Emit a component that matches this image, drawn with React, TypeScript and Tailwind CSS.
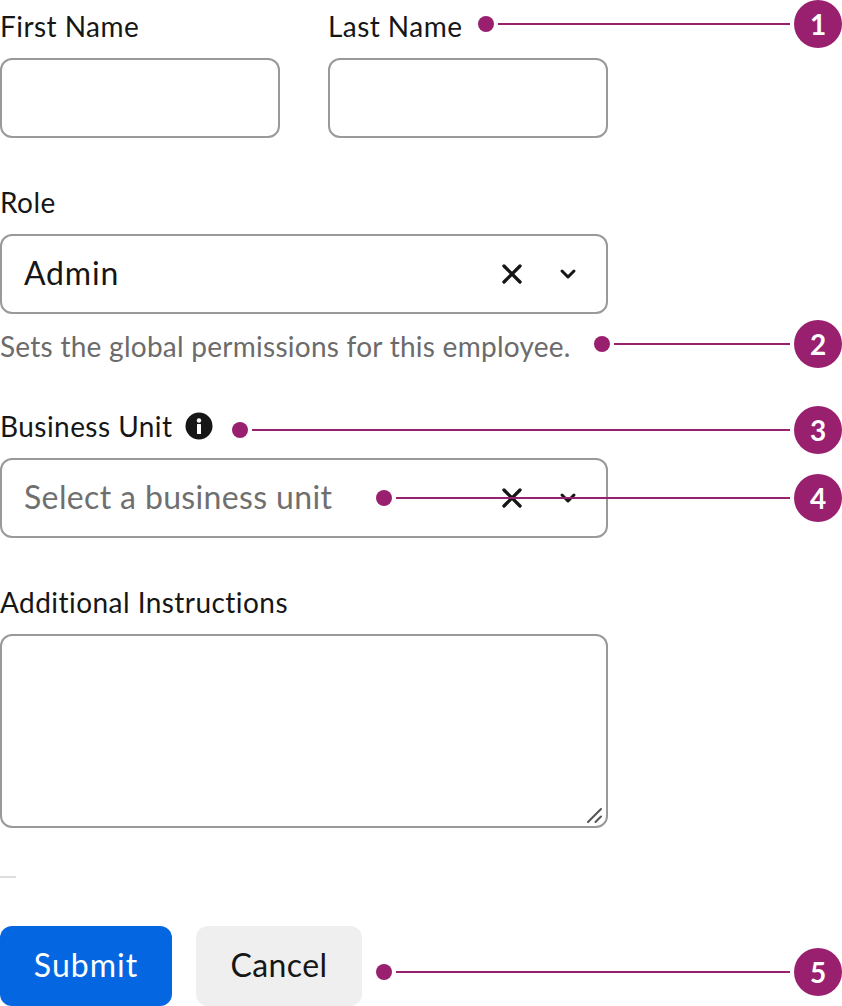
import { X, ChevronDown } from "lucide-react";

function Label({ children }: { children: React.ReactNode }) {
  return <div className="h-10 mb-[11px] pb-0.5 flex items-center gap-3 text-[28px] leading-10 tracking-[0.45px] text-[#161616]">{children}</div>;
}

function TextBox() {
  return <div className="h-20 w-[280px] rounded-xl border-2 border-[#999999] bg-white" />;
}

function SelectBox({ value, placeholder }: { value: string; placeholder?: boolean }) {
  return (
    <div className="h-20 w-[608px] rounded-xl border-2 border-[#999999] bg-white flex items-center pl-[22px] pr-[26px]">
      <span className={placeholder ? "flex-1 pb-0.5 text-[32px] tracking-[0.36px] text-[#6f6f6f]" : "flex-1 pb-0.5 text-[32px] tracking-[0.8px] text-[#161616]"}>{value}</span>
      <X size={32} strokeWidth={2.5} className="text-[#161616]" />
      <ChevronDown size={24} strokeWidth={3} className="ml-[28px] text-[#161616]" />
    </div>
  );
}

function Callout({ n, className }: { n: number; className: string }) {
  return (
    <div className={"absolute right-0 h-12 flex items-center " + className}>
      <div className="size-4 rounded-full bg-[#99206f]" />
      <div className="flex-1 h-0.5 mx-1 bg-[#99206f]" />
      <div className="size-12 rounded-full bg-[#99206f] flex items-center justify-center text-white text-[28px] font-bold">{n}</div>
    </div>
  );
}

export default function App() {
  return (
    <div className="relative h-[1006px] w-[842px] overflow-hidden bg-white font-['Lato',sans-serif]">
      <div className="w-[608px] pt-[7px]">
        <div className="flex gap-12">
          <div>
            <Label>First Name</Label>
            <TextBox />
          </div>
          <div>
            <Label>Last Name</Label>
            <TextBox />
          </div>
        </div>

        <div className="mt-[45px]">
          <Label>Role</Label>
          <SelectBox value="Admin" />
          <div className="mt-3 h-10 text-[28px] leading-10 tracking-[0.26px] text-[#6b6b6b]">Sets the global permissions for this employee.</div>
        </div>

        <div className="mt-[41px]">
          <Label>
            Business Unit
            <svg width="28" height="28" viewBox="0 0 28 28">
              <circle cx="14" cy="14" r="13.5" fill="#161616" />
              <circle cx="14" cy="8.5" r="2.2" fill="#fff" />
              <rect x="12" y="12" width="4" height="10" rx="0.5" fill="#fff" />
            </svg>
          </Label>
          <SelectBox value="Select a business unit" placeholder />
        </div>

        <div className="mt-[45px]">
          <Label>Additional Instructions</Label>
          <div className="relative h-[194px] rounded-xl border-2 border-[#999999] bg-white">
            <svg className="absolute right-[3px] bottom-[3px]" width="16" height="16" viewBox="0 0 16 16">
              <path d="M1 15 L14 2 M8.5 15 L14 9.5" stroke="#555555" strokeWidth="2" strokeLinecap="round" fill="none" />
            </svg>
          </div>
        </div>

        <div className="mt-12 h-0.5 w-4 bg-[#dddddd]" />

        <div className="mt-12 flex gap-6">
          <button className="h-20 w-[172px] pb-0.5 rounded-xl bg-[#0466e0] text-[32px] tracking-[1px] text-white">Submit</button>
          <button className="h-20 w-[166px] pb-0.5 rounded-xl bg-[#efefef] text-[32px] tracking-[0.4px] text-[#161616]">Cancel</button>
        </div>
      </div>

      <Callout n={1} className="top-0 left-[478px]" />
      <Callout n={2} className="top-[320px] left-[594px]" />
      <Callout n={3} className="top-[406px] left-[232px]" />
      <Callout n={4} className="top-[474px] left-[376px]" />
      <Callout n={5} className="top-[948px] left-[376px]" />
    </div>
  );
}
